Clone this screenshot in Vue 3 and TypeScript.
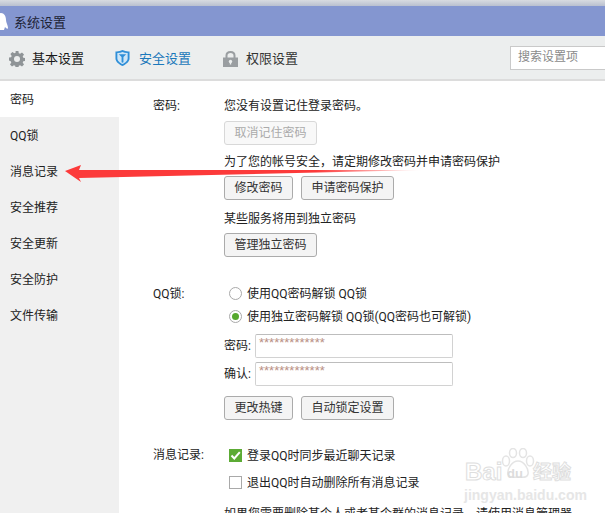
<script setup lang="ts">
const navItems: string[] = ['密码', 'QQ锁', '消息记录', '安全推荐', '安全更新', '安全防护', '文件传输']
</script>

<template>
  <div class="page">
    <div class="topstrip"></div>
    <header class="titlebar">
      <svg class="penguin" width="10" height="18" viewBox="0 0 10 18"><path d="M-6 16C-6 12-4 11-4 7C-4 2-1 0 1 0C4 0 6 3 6 7C6 10 8 12 8 15C8 16 7 16 6 15L5 14L4 17H-2L-4 15C-5 16-6 17-6 16Z" fill="#fff"/></svg>
      <span class="title">系统设置</span>
    </header>
    <div class="toolbar">
      <div class="tab tab-basic">
        <svg width="16" height="16" viewBox="0 0 16 16"><path d="M6.600 0h2.800l.4 2.200 1.300.6 1.900-1.300 2 2-1.300 1.900.6 1.300 2.200.4v2.800l-2.200.4-.6 1.300 1.300 1.900-2 2-1.900-1.300-1.300.6-.4 2.200H6.600l-.4-2.200-1.300-.6-1.900 1.300-2-2 1.300-1.900-.6-1.300L-.1 9.400V6.600l2.200-.4.6-1.300-1.300-1.900 2-2 1.900 1.300 1.300-.6z" fill="#8f9497"/><circle cx="8" cy="8" r="3" fill="#eceeee"/></svg>
        <span>基本设置</span>
      </div>
      <div class="tab tab-safe">
        <svg width="15" height="16" viewBox="0 0 16 17"><path d="M0.500 1.500C3 1.800 5.500 1.300 8 0C10.500 1.300 13 1.800 15.500 1.500V9C15.500 12.500 11.500 15.500 8 17C4.500 15.500 0.500 12.500 0.500 9Z" fill="#2f8fd8"/><path d="M2.500 3.200C4.500 3.300 6.300 2.900 8 2.200C9.700 2.900 11.500 3.300 13.500 3.200V9C13.500 11.500 10.500 13.700 8 15C5.500 13.700 2.500 11.500 2.500 9Z" fill="#cfe6f7"/><path d="M4 4.500H12L9 7.500V13L8 13.500L7 13V7.500Z" fill="#2f8fd8"/></svg>
        <span>安全设置</span>
      </div>
      <div class="tab tab-perm">
        <svg width="15" height="16" viewBox="0 0 15 16"><path d="M3.500 7V4.500C3.500 2.300 5.300 1 7.500 1C9.700 1 11.500 2.300 11.500 4.500V7" fill="none" stroke="#9a9ea1" stroke-width="2"/><rect x="0" y="6.500" width="15" height="9.500" fill="#9a9ea1"/><circle cx="7.500" cy="10.500" r="1.700" fill="#eceeee"/><rect x="6.800" y="10.500" width="1.400" height="3" fill="#eceeee"/></svg>
        <span>权限设置</span>
      </div>
      <div class="search">搜索设置项</div>
    </div>

    <div class="body">
      <aside class="side">
        <div v-for="(item, i) in navItems" :key="item" class="nav" :class="{ active: i === 0 }">{{ item }}</div>
      </aside>
      <main class="main">
        <section class="group group-pwd">
          <div class="label">密码:</div>
          <div class="content">
            <div class="line first-line">您没有设置记住登录密码。</div>
            <div class="row"><button class="btn disabled">取消记住密码</button></div>
            <div class="line gap-line">为了您的帐号安全，请定期修改密码并申请密码保护</div>
            <div class="row"><button class="btn">修改密码</button><button class="btn">申请密码保护</button></div>
            <div class="line gap-line2">某些服务将用到独立密码</div>
            <div class="row"><button class="btn">管理独立密码</button></div>
          </div>
        </section>

        <section class="group group-lock">
          <div class="label">QQ锁:</div>
          <div class="content">
            <div class="opt"><span class="radio"></span>使用QQ密码解锁 QQ锁</div>
            <div class="opt"><span class="radio on"></span>使用独立密码解锁 QQ锁(QQ密码也可解锁)</div>
            <div class="field field-first"><span class="flabel">密码:</span><div class="input">*************</div></div>
            <div class="field"><span class="flabel">确认:</span><div class="input">*************</div></div>
            <div class="row row-lock"><button class="btn">更改热键</button><button class="btn">自动锁定设置</button></div>
          </div>
        </section>

        <section class="group group-msg">
          <div class="label">消息记录:</div>
          <div class="content">
            <div class="opt"><span class="check on"><svg width="13" height="13" viewBox="0 0 13 13"><path d="M2.500 6.500L5.300 9.500L10.800 3.200" fill="none" stroke="#fff" stroke-width="2"/></svg></span>登录QQ时同步最近聊天记录</div>
            <div class="opt"><span class="check"></span>退出QQ时自动删除所有消息记录</div>
            <div class="line cut">如果您需要删除某个人或者某个群的消息记录，请使用消息管理器</div>
          </div>
        </section>
      </main>
    </div>

    <svg class="arrow" width="370" height="26" viewBox="0 0 370 26">
      <defs>
        <linearGradient id="tail" gradientUnits="userSpaceOnUse" x1="0" x2="360" y1="0" y2="0">
          <stop offset="0" stop-color="#fc3a3a"/><stop offset="0.7" stop-color="#fc3a3a"/><stop offset="1" stop-color="#fc3a3a" stop-opacity="0"/>
        </linearGradient>
      </defs>
      <path d="M1 11L17 5L15 10L360 10L15 18L17 22Z" fill="url(#tail)"/>
    </svg>

    <div class="watermark">
      <svg class="paw" width="36" height="32" viewBox="0 0 36 32" fill="#fff" stroke="#e4e4e4" stroke-width="1.500">
        <ellipse cx="6" cy="13" rx="3.500" ry="5"/><ellipse cx="13" cy="5" rx="3.500" ry="4.500"/><ellipse cx="23" cy="5" rx="3.500" ry="4.500"/><ellipse cx="30" cy="13" rx="3.500" ry="5"/>
        <path d="M18 13C12 13 7 21 8 26C9 31 15 29 18 29C21 29 27 31 28 26C29 21 24 13 18 13Z"/>
      </svg>
      <span class="wm-bai">Bai</span><span class="wm-du">du</span><span class="wm-cn">经验</span>
      <span class="wm-url">jingyan.baidu.com</span>
    </div>
  </div>
</template>

<style>
html, body { margin: 0; background: #fff; }
</style>

<style scoped>
.page {
  position: relative;
  width: 605px;
  height: 513px;
  overflow: hidden;
  background: #fff;
  font-family: Roboto, "Noto Sans CJK SC", sans-serif;
  font-size: 12px;
  color: #222;
}
.topstrip { height: 6px; background: linear-gradient(#d8dbe0, #b9c0cf); }
.titlebar {
  height: 30px;
  background: #8496d0;
  display: flex;
  align-items: center;
  color: #1c2235;
}
.penguin { margin-top: 2px; flex: none; }
.title { margin-left: 4px; font-size: 13px; }
.toolbar {
  box-sizing: border-box;
  height: 45px;
  padding: 3px 0 0 9px;
  background: #eceeee;
  border-bottom: 2px solid #dcdcdc;
  display: flex;
  align-items: center;
  font-size: 13px;
}
.tab { display: flex; align-items: center; }
.tab span { line-height: 16px; }
.tab-basic span { margin-left: 7px; color: #1a1a1a; }
.tab-safe { margin-left: 31px; }
.tab-safe svg { margin-top: -3px; }
.tab-safe span { margin-left: 9px; color: #1b78bb; }
.tab-perm { margin-left: 32px; }
.tab-perm span { margin-left: 8px; color: #333; }
.search {
  box-sizing: border-box;
  margin-left: auto;
  width: 95px;
  height: 24px;
  margin-top: -3px;
  background: #fff;
  border: 1px solid #c9c9c9;
  border-right: 0;
  padding-left: 7px;
  font-size: 12px;
  line-height: 20px;
  color: #8a8a8a;
}
.body { display: flex; align-items: stretch; height: 432px; }
.side { width: 119px; flex: none; background: #f0f0f0; }
.nav { height: 36px; line-height: 38px; padding-left: 10px; color: #222; }
.nav.active { background: #fff; }
.main { flex: 1; min-width: 0; }
.group { display: flex; }
.label { width: 71px; margin-left: 34px; flex: none; line-height: 20px; }
.group-pwd { padding-top: 15px; }
.group-lock { padding-top: 25px; }
.group-lock .label { margin-top: 2px; }
.group-msg { padding-top: 22px; }
.group-msg .label { margin-top: 3px; }
.content { flex: 1; min-width: 0; }
.line { line-height: 20px; white-space: nowrap; }
.row { display: flex; gap: 8px; }
.btn {
  box-sizing: border-box;
  height: 24px;
  padding: 0 9.5px;
  background: #f4f4f4;
  border: 1px solid #ababab;
  border-radius: 3px;
  font: inherit;
  color: #333;
  line-height: 20px;
}
.btn.disabled { border-color: #d8d8d8; color: #aaa; background: #f8f8f8; }
.first-line { margin-bottom: 5px; }
.gap-line { margin-top: 7px; margin-bottom: 4px; }
.gap-line2 { margin-top: 9px; margin-bottom: 4px; }
.opt { display: flex; align-items: center; height: 23px; line-height: 18px; white-space: nowrap; }
.radio {
  box-sizing: border-box;
  width: 13px;
  height: 13px;
  margin-left: 5px;
  margin-right: 5px;
  border: 1px solid #a9a9a9;
  border-radius: 50%;
  background: #fff;
  flex: none;
}
.radio.on { position: relative; }
.radio.on::after {
  content: "";
  position: absolute;
  left: 2px;
  top: 2px;
  width: 7px;
  height: 7px;
  border-radius: 50%;
  background: #56a82e;
}
.field { display: flex; align-items: center; height: 24px; margin-top: 4px; }
.field-first { margin-top: 6px; }
.flabel { width: 31px; flex: none; line-height: 18px; }
.input {
  box-sizing: border-box;
  width: 198px;
  height: 24px;
  border: 1px solid #d2d2d2;
  border-top-color: #bdbdbd;
  border-radius: 2px;
  padding-left: 3px;
  font-family: "Liberation Sans", sans-serif;
  font-size: 13px;
  line-height: 16px;
  color: #b98f84;
}
.row-lock { margin-top: 10px; }
.check {
  box-sizing: border-box;
  width: 13px;
  height: 13px;
  margin-left: 5px;
  margin-right: 5px;
  border: 1px solid #a9a9a9;
  background: #fff;
  flex: none;
  display: flex;
}
.check.on { background: #5cab35; border: 0; }
.group-msg .opt { height: 27px; }
.cut { margin-top: 8px; }
.arrow { position: absolute; left: 64px; top: 160px; }
.watermark {
  position: absolute;
  left: 464px;
  top: 445px;
  width: 141px;
  height: 68px;
  color: #fff;
  font-family: "Liberation Sans", "Noto Sans CJK SC", sans-serif;
  -webkit-text-stroke: 1px #dedede;
  font-weight: 700;
}
.paw { position: absolute; left: 36px; top: 3px; }
.wm-bai { position: absolute; left: 1px; top: 15px; font-size: 24px; line-height: 24px; }
.wm-du { position: absolute; left: 43px; top: 21px; font-size: 13px; line-height: 16px; -webkit-text-stroke: 0; color: #dcdcdc; }
.wm-cn { position: absolute; left: 69px; top: 16px; font-size: 19px; line-height: 24px; }
.wm-url { position: absolute; left: 0; top: 42px; font-size: 14px; line-height: 16px; white-space: nowrap; -webkit-text-stroke: 0; color: #e6e6e6; }
</style>
